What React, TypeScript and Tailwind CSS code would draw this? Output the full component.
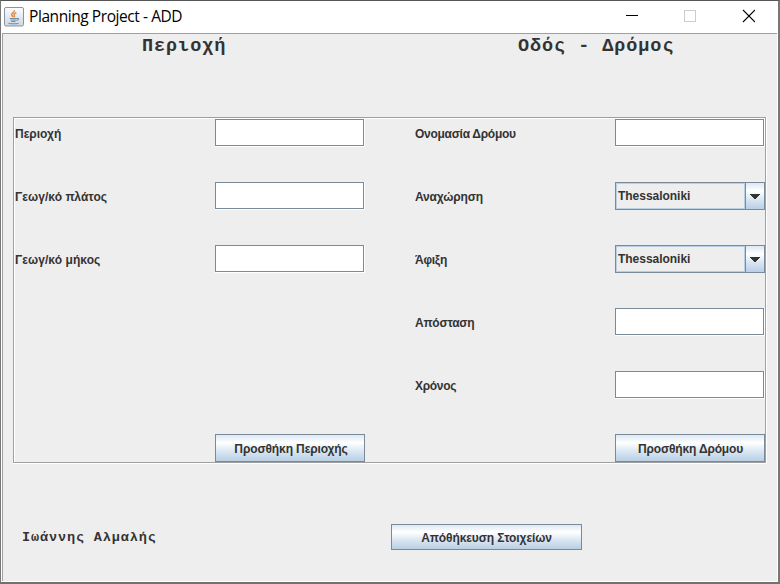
import type { ReactNode } from "react";

function Label({ children, className = "" }: { children: ReactNode; className?: string }) {
  return (
    <div className={`flex h-7 w-[150px] items-center pt-0.5 whitespace-nowrap ${className}`}>
      {children}
    </div>
  );
}

function TextField() {
  return (
    <div className="h-7 w-[150px] border-r border-b border-white">
      <input type="text" className="block h-[27px] w-[149px] border border-[#7a8a99] bg-white px-1 outline-none" />
    </div>
  );
}

function Combo({ value }: { value: string }) {
  return (
    <div className="flex h-7 w-[150px] border border-[#7a8a99]">
      <div className="flex flex-1 items-center border border-[#b8cfe5] pl-px">
        <span className="tracking-[-0.03px]">{value}</span>
      </div>
      <div className="flex w-[19px] items-center justify-center border-l border-[#7a8a99] bg-[linear-gradient(#dde8f3,#fff_30%,#dde8f3_60%,#b8cfe5)]">
        <svg width="10" height="5" viewBox="0 0 10 5" className="mt-px" shapeRendering="crispEdges">
          <path d="M0 0h10v1H9v1H8v1H7v1H6v1H4V4H3V3H2V2H1V1H0z" fill="#333" />
        </svg>
      </div>
    </div>
  );
}

function Button({ children, className }: { children: ReactNode; className: string }) {
  return (
    <button
      className={`flex items-center justify-center border border-[#7a8a99] bg-[linear-gradient(#dde8f3,#fff_30%,#dde8f3_60%,#b8cfe5)] pt-0.5 font-bold whitespace-nowrap ${className}`}
    >
      {children}
    </button>
  );
}

function JavaIcon() {
  return (
    <svg width="20" height="20" viewBox="0 0 20 20" className="-mt-px">
      <defs>
        <linearGradient id="tile" x1="0" y1="0" x2="0" y2="1">
          <stop offset="0" stopColor="#fdfdfe" />
          <stop offset="1" stopColor="#ced6df" />
        </linearGradient>
      </defs>
      <rect x="0.5" y="0.5" width="19" height="18.5" rx="1.5" fill="url(#tile)" stroke="#8794a3" />
      <path d="M10.4 3.2c.6 2-3 2.600-2.800 4.500.1 1 1.200 1.600 1.600 2.400M12.300 5.800c-2 .7-2.800 1.500-2 2.600.5.700.2 1.200-.3 1.700" fill="none" stroke="#e58a45" strokeWidth="1.5" />
      <path d="M5.800 11.500h7.200M6.500 13h5.700M7.200 14.500h4.300M13 11.500c2.300-.4 2 1.400-.5 2M4.500 16.200c2 .8 8 .8 10 0" fill="none" stroke="#6a8fab" strokeWidth="1.1" />
    </svg>
  );
}

export default function App() {
  return (
    <div className="relative h-[584px] w-[780px] overflow-hidden border-t border-r-2 border-b-2 border-l border-t-[#555] border-r-[#777] border-b-[#707070] border-l-[#777] bg-white font-['Liberation_Sans',Arial,sans-serif] text-xs font-bold text-[#333]">
      <header className="flex h-8 items-center pl-[3px]">
        <JavaIcon />
        <h1 className="mb-0.5 ml-[5px] flex-1 font-['Open_Sans','Noto_Sans',sans-serif] text-[15.5px] font-normal tracking-[-0.43px] whitespace-nowrap text-black">
          Planning Project - ADD
        </h1>
        <svg width="130" height="14" viewBox="0 0 130 14" className="mr-[23px] mb-0.5" fill="none">
          <path d="M1 6.500h12" stroke="#000" shapeRendering="crispEdges" />
          <rect x="59.500" y="1.500" width="11" height="11" stroke="#ccc" />
          <path d="M118 1l12 12M130 1l-12 12" stroke="#000" strokeWidth="1.1" />
        </svg>
      </header>
      <main className="mr-px ml-px h-[548px] border-t border-l border-[#a0a0a0] bg-[#eee]">
        <div className="flex h-[83px] pl-[139px] font-['Liberation_Mono','Courier_New',monospace] text-[18.5px] leading-[26px] tracking-[0.93px]">
          <h2 className="w-[376px]">Περιοχή</h2>
          <h2 className="whitespace-pre">Οδός - Δρόμος</h2>
        </div>
        <section className="ml-[10px] h-[347px] w-[754px] border-r border-b border-white">
          <div className="h-[346px] w-[753px] border border-[#a0a0a0]">
            <div className="grid h-[344px] grid-cols-[150px_150px_150px_150px] content-start gap-x-[50px] gap-y-[35px] border-t border-l border-white">
              <Label>Περιοχή</Label>
              <TextField />
              <Label className="tracking-[-0.28px]">Ονομασία Δρόμου</Label>
              <TextField />
              <Label className="tracking-[0.06px]">Γεωγ/κό πλάτος</Label>
              <TextField />
              <Label className="tracking-[-0.16px]">Αναχώρηση</Label>
              <Combo value="Thessaloniki" />
              <Label className="tracking-[0.06px]">Γεωγ/κό μήκος</Label>
              <TextField />
              <Label className="tracking-[-0.25px]">Άφιξη</Label>
              <Combo value="Thessaloniki" />
              <Label className="col-start-3 tracking-[-0.25px]">Απόσταση</Label>
              <TextField />
              <Label className="col-start-3 tracking-[-0.3px]">Χρόνος</Label>
              <TextField />
              <Button className="col-start-2 h-7 w-[150px] pl-0.5 tracking-[-0.12px]">Προσθήκη Περιοχής</Button>
              <Button className="col-start-4 h-7 w-[150px] pl-px tracking-[-0.16px]">Προσθήκη Δρόμου</Button>
            </div>
          </div>
        </section>
        <footer className="flex items-center pt-[60px] pl-[19px]">
          <span className="w-[369px] pt-0.5 font-['Liberation_Mono','Courier_New',monospace] text-[13.5px] tracking-[0.88px]">
            Ιωάννης Αλμαλής
          </span>
          <Button className="h-[26px] w-[191px] tracking-[-0.1px]">Απόθήκευση Στοιχείων</Button>
        </footer>
      </main>
      <div className="absolute -bottom-0.5 left-[41px] h-px w-[217px] bg-[repeating-linear-gradient(90deg,#222_0_5px,#707070_5px_8px,#222_8px_11px,#707070_11px_14px)]" />
    </div>
  );
}
